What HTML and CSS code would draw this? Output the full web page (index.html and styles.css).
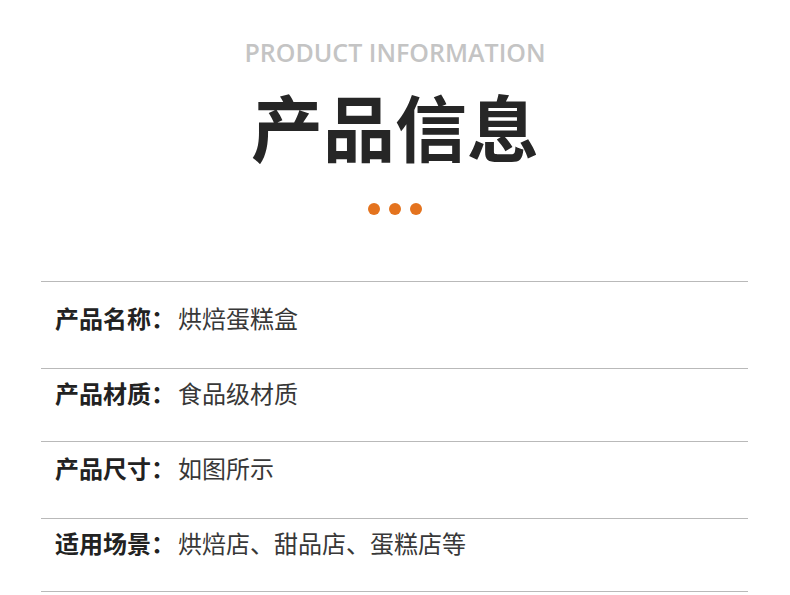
FILE: index.html
```html
<!DOCTYPE html>
<html lang="zh-CN">
<head>
<meta charset="utf-8">
<link rel="stylesheet" href="styles.css">
</head>
<body>
<div class="page">
  <header class="head">
    <div class="en">PRODUCT INFORMATION</div>
    <h1 class="title">产品信息</h1>
    <div class="dots"><span></span><span></span><span></span></div>
  </header>
  <div class="table">
    <div class="row row-first"><span class="label">产品名称：</span><span class="value">烘焙蛋糕盒</span></div>
    <div class="row row-b"><span class="label">产品材质：</span><span class="value">食品级材质</span></div>
    <div class="row row-c"><span class="label">产品尺寸：</span><span class="value">如图所示</span></div>
    <div class="row row-b"><span class="label">适用场景：</span><span class="value">烘焙店、甜品店、蛋糕店等</span></div>
  </div>
</div>
</body>
</html>
```

FILE: styles.css
```css
html, body {
  margin: 0;
  padding: 0;
  background: #ffffff;
}
.page {
  width: 790px;
  height: 595px;
  overflow: hidden;
  font-family: "Noto Sans CJK SC", "Noto Sans", sans-serif;
}
.head {
  display: flex;
  flex-direction: column;
  align-items: center;
  padding-top: 36px;
}
.en {
  font-family: "Open Sans", "Noto Sans", sans-serif;
  font-weight: 600;
  font-size: 25px;
  line-height: 32px;
  color: #c4c4c4;
  letter-spacing: 0;
}
.title {
  margin: 12px 0 0;
  font-size: 72px;
  line-height: 90px;
  font-weight: 700;
  color: #262626;
  letter-spacing: 0;
}
.dots {
  display: flex;
  gap: 9px;
  margin-top: 33px;
}
.dots span {
  width: 12px;
  height: 12px;
  border-radius: 50%;
  background: #e4731e;
}
.table {
  margin: 66px 42px 0 41px;
  border-top: 1px solid #b9b9b9;
}
.row {
  display: flex;
  align-items: center;
  padding-left: 14px;
  font-size: 24px;
  line-height: 30px;
  border-bottom: 1px solid #b9b9b9;
}
.row-first { padding-top: 21px; padding-bottom: 35px; }
.row-b { padding-top: 9px; padding-bottom: 33px; }
.row-c { padding-top: 11px; padding-bottom: 35px; }
.label {
  font-weight: 700;
  color: #222222;
}
.value {
  margin-left: 3px;
  font-weight: 400;
  color: #383838;
}
```
